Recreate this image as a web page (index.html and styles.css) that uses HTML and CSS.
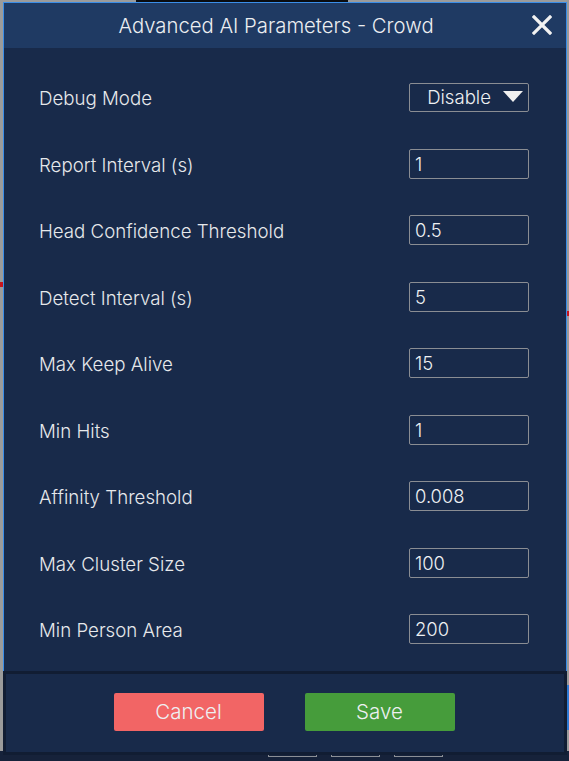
FILE: index.html
```html
<!DOCTYPE html>
<html>
<head>
<meta charset="utf-8">
<link rel="stylesheet" href="styles.css">
</head>
<body>
<div class="backdrop">
  <div class="bg-top-black"></div>
  <div class="bg-mark bg-mark-left"></div>
  <div class="bg-mark bg-mark-right"></div>
  <div class="bg-blue-right"></div>
  <div class="bg-bottom">
    <span class="bg-box"></span><span class="bg-box"></span><span class="bg-box"></span>
  </div>
</div>
<div class="dialog">
  <div class="header">
    <div class="title">Advanced AI Parameters - Crowd</div>
    <button class="close" aria-label="Close">
      <svg width="20" height="20" viewBox="0 0 20 20"><path d="M2 2 L18 18 M18 2 L2 18" stroke="#f2f2f2" stroke-width="3.2" stroke-linecap="square"/></svg>
    </button>
  </div>
  <div class="content">
    <div class="row"><span class="label">Debug Mode</span>
      <div class="select"><span>Disable</span><svg width="20" height="12" viewBox="0 0 20 12"><path d="M0 0 H20 L10 11 Z" fill="#f0f0f0"/></svg></div>
    </div>
    <div class="row"><span class="label">Report Interval (s)</span><div class="input">1</div></div>
    <div class="row"><span class="label">Head Confidence Threshold</span><div class="input">0.5</div></div>
    <div class="row"><span class="label">Detect Interval (s)</span><div class="input">5</div></div>
    <div class="row"><span class="label">Max Keep Alive</span><div class="input">15</div></div>
    <div class="row"><span class="label">Min Hits</span><div class="input">1</div></div>
    <div class="row"><span class="label">Affinity Threshold</span><div class="input">0.008</div></div>
    <div class="row"><span class="label">Max Cluster Size</span><div class="input">100</div></div>
    <div class="row"><span class="label">Min Person Area</span><div class="input">200</div></div>
  </div>
  <div class="footer">
    <button class="btn btn-cancel">Cancel</button>
    <button class="btn btn-save">Save</button>
  </div>
</div>
</body>
</html>
```
FILE: styles.css
```css
html, body {
  margin: 0;
  padding: 0;
}
body {
  width: 569px;
  height: 761px;
  background: #9b9b9b;
  position: relative;
  overflow: hidden;
  font-family: "Inter", "Liberation Sans", sans-serif;
  font-weight: 350;
  color: #e6e8eb;
  padding: 2px 0 0 3px;
  box-sizing: border-box;
}
.backdrop {
  position: absolute;
  inset: 0;
}
.bg-top-black {
  position: absolute;
  left: 136px;
  top: 0;
  width: 212px;
  height: 3px;
  background: #0a0c10;
}
.bg-mark {
  position: absolute;
  width: 4px;
  height: 5px;
  background: #c8141c;
}
.bg-mark-left { left: 0; top: 282px; width: 3px; }
.bg-mark-right { right: 0; top: 311px; width: 3px; }
.bg-blue-right {
  position: absolute;
  right: 0;
  top: 685px;
  width: 3px;
  height: 45px;
  background: #2f7ad4;
}
.bg-bottom {
  position: absolute;
  left: 0;
  right: 0;
  bottom: 0;
  height: 10px;
  background: #16223a;
}
.bg-box {
  position: absolute;
  top: 0;
  width: 47px;
  height: 5px;
  border: 1px solid #8b8f96;
  border-top: none;
}
.bg-box:nth-child(1) { left: 268px; }
.bg-box:nth-child(2) { left: 331px; }
.bg-box:nth-child(3) { left: 394px; }

.dialog {
  position: relative;
  width: 564px;
  height: 751px;
  box-sizing: border-box;
  border: 1px solid #3b8ee8;
  background: #182a4a;
  display: flex;
  flex-direction: column;
}
.header {
  height: 45px;
  flex: none;
  background: #1f3a63;
  display: flex;
  align-items: center;
  justify-content: center;
  position: relative;
}
.title {
  font-size: 20.3px;
  color: #eceef1;
  margin-left: -18px;
  margin-top: -1px;
}
.close {
  position: absolute;
  right: 14px;
  top: 12px;
  background: none;
  border: none;
  padding: 0;
  width: 20px;
  height: 20px;
  cursor: pointer;
}
.close svg { display: block; }
.content {
  flex: 1;
  padding: 16px 37px 8px 35px;
  display: grid;
  grid-template-rows: repeat(9, 66.5px);
}
.row {
  display: flex;
  align-items: center;
  justify-content: space-between;
}
.label {
  font-size: 18.7px;
  margin-top: 3px;
}
.input {
  width: 120px;
  height: 30px;
  box-sizing: border-box;
  border: 1px solid #8a8d93;
  border-radius: 2px;
  font-size: 18.4px;
  padding-left: 5px;
  line-height: 29px;
  color: #eef0f2;
}
.select {
  width: 120px;
  height: 29px;
  box-sizing: border-box;
  border: 1px solid #8a8d93;
  border-radius: 2px;
  font-size: 18.6px;
  display: flex;
  align-items: center;
  justify-content: flex-end;
  gap: 12px;
  padding-right: 5px;
  color: #eef0f2;
}
.select svg { display: block; }
.footer {
  flex: none;
  height: 78px;
  margin: 3px 2px 2px 2px;
  box-sizing: border-box;
  background: #182a4a;
  outline: 3px solid #111d33;
  display: flex;
  justify-content: center;
  align-items: center;
  gap: 41px;
  padding-right: 2px;
  padding-bottom: 2px;
}
.btn {
  width: 150px;
  height: 38px;
  border: none;
  border-radius: 2px;
  font-family: "Inter", "Liberation Sans", sans-serif;
  font-weight: 350;
  font-size: 20.5px;
  color: #eef0f2;
  cursor: pointer;
}
.btn-cancel { background: #f26565; }
.btn-save { background: #469c3b; }
```
